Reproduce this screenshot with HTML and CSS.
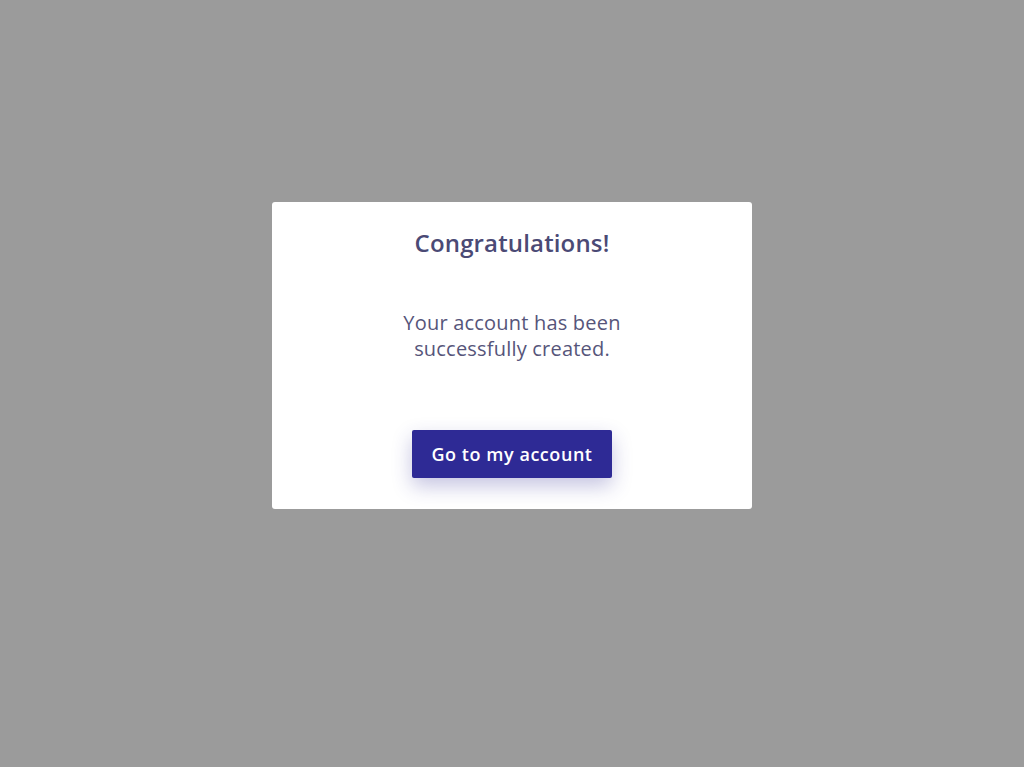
FILE: index.html
```html
<!DOCTYPE html>
<html lang="en">
<head>
<meta charset="utf-8">
<title>Congratulations</title>
<link rel="stylesheet" href="styles.css">
</head>
<body>
<div class="overlay">
  <div class="modal">
    <h1 class="modal-title">Congratulations!</h1>
    <p class="modal-text">Your account has been successfully created.</p>
    <button class="modal-button" type="button">Go to my account</button>
  </div>
</div>
</body>
</html>
```
FILE: styles.css
```css
html, body {
  margin: 0;
  padding: 0;
  height: 100%;
}
body {
  background: #9b9b9b;
  font-family: "Open Sans", "Noto Sans", sans-serif;
}
.overlay {
  height: 767px;
  display: flex;
  justify-content: center;
  padding-top: 202px;
  box-sizing: border-box;
}
.modal {
  width: 480px;
  height: 307px;
  box-sizing: border-box;
  background: #ffffff;
  border-radius: 3px;
  padding: 25px 0 0;
  display: flex;
  flex-direction: column;
  align-items: center;
}
.modal-title {
  margin: 0;
  font-size: 24px;
  line-height: 32px;
  font-weight: 600;
  letter-spacing: 0.15px;
  color: #4b4a75;
}
.modal-text {
  margin: 51px 0 0;
  max-width: 240px;
  text-align: center;
  font-size: 20px;
  line-height: 26px;
  font-weight: 400;
  letter-spacing: 0.2px;
  color: #56557a;
}
.modal-button {
  margin-top: 68px;
  width: 200px;
  height: 48px;
  border: none;
  border-radius: 2px;
  background: #2e2a95;
  color: #ffffff;
  font-family: "Open Sans", "Noto Sans", sans-serif;
  font-size: 18px;
  font-weight: 600;
  letter-spacing: 0.55px;
  box-shadow: 0 8px 20px rgba(46, 42, 149, 0.28);
  cursor: pointer;
}
```
